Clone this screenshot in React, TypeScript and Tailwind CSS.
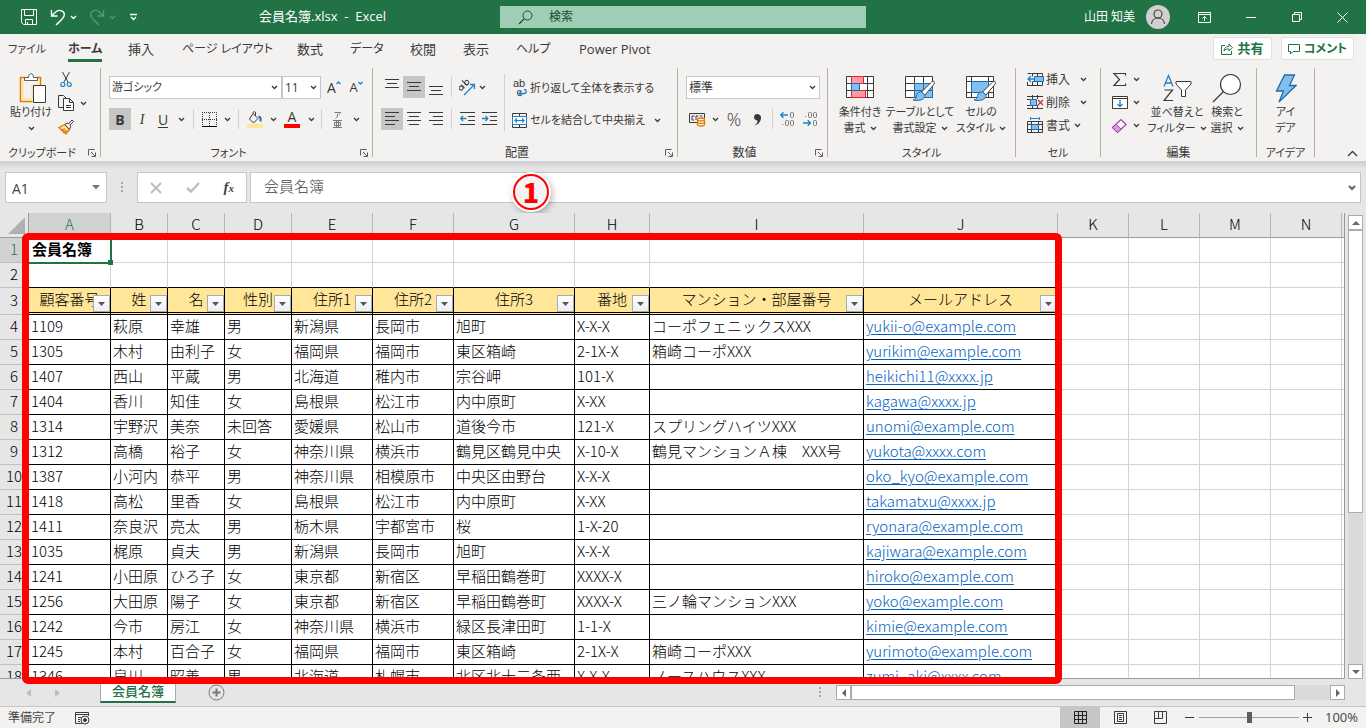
import type { ReactNode } from "react";
import clsx from "clsx";

interface Member {
  id: string;
  sei: string;
  mei: string;
  sex: string;
  addr1: string;
  addr2: string;
  addr3: string;
  lot: string;
  building: string;
  email: string;
}

const members: Member[] = [
  { id: "1109", sei: "萩原", mei: "幸雄", sex: "男", addr1: "新潟県", addr2: "長岡市", addr3: "旭町", lot: "X-X-X", building: "コーポフェニックスXXX", email: "yukii-o@example.com" },
  { id: "1305", sei: "木村", mei: "由利子", sex: "女", addr1: "福岡県", addr2: "福岡市", addr3: "東区箱崎", lot: "2-1X-X", building: "箱崎コーポXXX", email: "yurikim@example.com" },
  { id: "1407", sei: "西山", mei: "平蔵", sex: "男", addr1: "北海道", addr2: "稚内市", addr3: "宗谷岬", lot: "101-X", building: "", email: "heikichi11@xxxx.jp" },
  { id: "1404", sei: "香川", mei: "知佳", sex: "女", addr1: "島根県", addr2: "松江市", addr3: "内中原町", lot: "X-XX", building: "", email: "kagawa@xxxx.jp" },
  { id: "1314", sei: "宇野沢", mei: "美奈", sex: "未回答", addr1: "愛媛県", addr2: "松山市", addr3: "道後今市", lot: "121-X", building: "スプリングハイツXXX", email: "unomi@example.com" },
  { id: "1312", sei: "高橋", mei: "裕子", sex: "女", addr1: "神奈川県", addr2: "横浜市", addr3: "鶴見区鶴見中央", lot: "X-10-X", building: "鶴見マンションＡ棟　XXX号", email: "yukota@xxxx.com" },
  { id: "1387", sei: "小河内", mei: "恭平", sex: "男", addr1: "神奈川県", addr2: "相模原市", addr3: "中央区由野台", lot: "X-X-X", building: "", email: "oko_kyo@example.com" },
  { id: "1418", sei: "高松", mei: "里香", sex: "女", addr1: "島根県", addr2: "松江市", addr3: "内中原町", lot: "X-XX", building: "", email: "takamatxu@xxxx.jp" },
  { id: "1411", sei: "奈良沢", mei: "亮太", sex: "男", addr1: "栃木県", addr2: "宇都宮市", addr3: "桜", lot: "1-X-20", building: "", email: "ryonara@example.com" },
  { id: "1035", sei: "梶原", mei: "貞夫", sex: "男", addr1: "新潟県", addr2: "長岡市", addr3: "旭町", lot: "X-X-X", building: "", email: "kajiwara@example.com" },
  { id: "1241", sei: "小田原", mei: "ひろ子", sex: "女", addr1: "東京都", addr2: "新宿区", addr3: "早稲田鶴巻町", lot: "XXXX-X", building: "", email: "hiroko@example.com" },
  { id: "1256", sei: "大田原", mei: "陽子", sex: "女", addr1: "東京都", addr2: "新宿区", addr3: "早稲田鶴巻町", lot: "XXXX-X", building: "三ノ輪マンションXXX", email: "yoko@example.com" },
  { id: "1242", sei: "今市", mei: "房江", sex: "女", addr1: "神奈川県", addr2: "横浜市", addr3: "緑区長津田町", lot: "1-1-X", building: "", email: "kimie@example.com" },
  { id: "1245", sei: "本村", mei: "百合子", sex: "女", addr1: "福岡県", addr2: "福岡市", addr3: "東区箱崎", lot: "2-1X-X", building: "箱崎コーポXXX", email: "yurimoto@example.com" },
  { id: "1346", sei: "泉川", mei: "昭善", sex: "男", addr1: "北海道", addr2: "札幌市", addr3: "北区北十二条西", lot: "X-X-X", building: "ノースハウスXXX", email: "zumi_aki@xxxx.com" },
];

const columns = [
  { letter: "A", title: "顧客番号", width: "w-[82px]" },
  { letter: "B", title: "姓", width: "w-[57px]" },
  { letter: "C", title: "名", width: "w-[57px]" },
  { letter: "D", title: "性別", width: "w-[67px]" },
  { letter: "E", title: "住所1", width: "w-[81px]" },
  { letter: "F", title: "住所2", width: "w-[81px]" },
  { letter: "G", title: "住所3", width: "w-[121px]" },
  { letter: "H", title: "番地", width: "w-[75px]" },
  { letter: "I", title: "マンション・部屋番号", width: "w-[214px]" },
  { letter: "J", title: "メールアドレス", width: "w-[194px]" },
];

const emptyColumns = ["K", "L", "M", "N"];

const tabs = [
  { label: "ファイル", style: "w-[60px] text-[11px]" },
  { label: "ホーム", style: "w-[60px] text-[12px]" },
  { label: "挿入", style: "w-[54px] text-[13px]" },
  { label: "ページ レイアウト", style: "w-[115px] text-[12px]" },
  { label: "数式", style: "w-[53px] text-[13px]" },
  { label: "データ", style: "w-[60px] text-[12px]" },
  { label: "校閲", style: "w-[53px] text-[13px]" },
  { label: "表示", style: "w-[53px] text-[13px]" },
  { label: "ヘルプ", style: "w-[63px] text-[12px]" },
  { label: "Power Pivot", style: "w-[80px] text-[13px]" },
];

function Icon({ w = 16, h = 16, children }: { w?: number; h?: number; children: ReactNode }) {
  return (
    <svg width={w} height={h} viewBox={`0 0 ${w} ${h}`} fill="none" stroke="#3b3a39" className="shrink-0" aria-hidden="true">
      {children}
    </svg>
  );
}

function Chevron({ color = "#3b3a39" }: { color?: string }) {
  return (
    <svg width="7" height="5" viewBox="0 0 7 5" fill="none" stroke={color} strokeWidth="1.3" className="shrink-0" aria-hidden="true">
      <path d="M1 1l2.5 2.5L6 1" />
    </svg>
  );
}

function Tool({ label, width = "w-[22px]", active = false, children }: { label: string; width?: string; active?: boolean; children: ReactNode }) {
  return (
    <button aria-label={label} className={clsx("flex h-[22px] shrink-0 items-center justify-center", width, active && "bg-[#c8c6c4]")}>
      {children}
    </button>
  );
}

function Divider() {
  return <div className="mx-1 h-5 w-px shrink-0 bg-[#d2d0ce]" />;
}

function Launcher() {
  return (
    <button aria-label="詳細設定" className="flex w-4 shrink-0 items-center justify-center">
      <Icon w={8} h={8}>
        <path d="M.5 6.500V.5H6.500M3 3l4 4M7.500 3.500v4h-4" stroke="#605e5c" />
      </Icon>
    </button>
  );
}

function Group({ label, width, labelSize = "text-[11px]", launcher = false, children }: { label: string; width: string; labelSize?: string; launcher?: boolean; children: ReactNode }) {
  return (
    <section className={clsx("flex shrink-0", width)}>
      <div className="flex min-w-0 flex-1 flex-col">
        <div className="h-[77px]">{children}</div>
        <div className="flex h-4 items-center">
          <span className={clsx("flex-1 text-center leading-4 whitespace-nowrap", labelSize)}>{label}</span>
          {launcher && <Launcher />}
        </div>
      </div>
      <div className="h-[89px] w-px bg-[#b3b0ad]" />
    </section>
  );
}

function BigButton({ icon, lines, width, menu = true }: { icon: ReactNode; lines: [string, string]; width: string; menu?: boolean }) {
  return (
    <button className={clsx("flex shrink-0 flex-col items-center pt-1 text-[11px] leading-4 whitespace-nowrap", width)}>
      <span className="flex h-8 items-center justify-center">{icon}</span>
      <span>{lines[0]}</span>
      <span className="flex items-center gap-1">
        {lines[1]}
        {menu && <Chevron />}
      </span>
    </button>
  );
}

function Combo({ label, value, width, size = "text-[12px]" }: { label: string; value: string; width: string; size?: string }) {
  return (
    <div className={clsx("relative h-[23px] border border-[#c8c6c4] bg-white", width, size)}>
      <select aria-label={label} className="h-full w-full appearance-none bg-transparent pl-[2px] outline-none">
        <option>{value}</option>
      </select>
      <span className="pointer-events-none absolute top-2 right-[3px]">
        <Chevron />
      </span>
    </div>
  );
}

function TitleBar() {
  return (
    <header className="flex h-[34px] shrink-0 items-center bg-[#217346] text-white">
      <div className="flex min-w-0 flex-1 items-center">
        <button aria-label="上書き保存" className="ml-5">
          <Icon w={18} h={18}>
            <path d="M1.500 1.500h15v15h-13l-2-2zM4.500 1.500v6h9v-6M5.500 16.500v-5h7v5M7.500 14v2.500" stroke="#fff" />
          </Icon>
        </button>
        <button aria-label="元に戻す" className="ml-3">
          <Icon w={16} h={18}>
            <path d="M1.500 2v6h6M1.700 7.700L6 3.700c4-3 9.500 0 8 4.600C13.300 10.500 9 14 6 17" stroke="#fff" strokeWidth="1.4" />
          </Icon>
        </button>
        <button aria-label="元に戻すの一覧" className="ml-1">
          <Chevron color="#fff" />
        </button>
        <button aria-label="やり直し" className="ml-3">
          <Icon w={16} h={18}>
            <path d="M14.500 2v6h-6M14.300 7.700L10 3.700C6 .7.500 3.700 2 8.300 2.700 10.500 7 14 10 17" stroke="#4f9a70" strokeWidth="1.4" />
          </Icon>
        </button>
        <button aria-label="やり直しの一覧" className="ml-1">
          <Chevron color="#4f9a70" />
        </button>
        <button aria-label="クイック アクセス ツール バーのユーザー設定" className="ml-[13px]">
          <Icon w={9} h={8}>
            <path d="M1 1.500h7M2 4l2.500 2.500L7 4" stroke="#fff" strokeWidth="1.300" />
          </Icon>
        </button>
        <h1 className="ml-[121px] text-[13px] whitespace-pre">会員名簿.xlsx  -  Excel</h1>
      </div>
      <div className="flex h-[22px] w-[366px] shrink-0 items-center gap-4 bg-[#a0cdb6] pl-[18px]">
        <Icon w={15} h={15}>
          <circle cx="9.500" cy="5.500" r="4.500" stroke="#10502c" />
          <path d="M6.300 8.700L1 14" stroke="#10502c" strokeWidth="1.200" />
        </Icon>
        <input aria-label="検索" placeholder="検索" className="w-full bg-transparent outline-none placeholder:text-[#10502c]" />
      </div>
      <div className="flex flex-1 items-center justify-end">
        <span className="text-[12px]">山田 知美</span>
        <svg width="24" height="24" viewBox="0 0 24 24" className="mr-6 ml-[11px]" fill="none" stroke="#444" strokeWidth="1.200" aria-hidden="true">
          <circle cx="12" cy="12" r="12" fill="#d2d0ce" stroke="none" />
          <circle cx="12" cy="9" r="4" />
          <path d="M5.500 19c.5-8 12.500-8 13 0" />
        </svg>
        <button aria-label="リボンの表示オプション" className="flex w-[51px] justify-start pl-1">
          <Icon w={13} h={11}>
            <path d="M.5.500h12v10H.5zM.5 2.500h12M6.500 9V4.500M4.500 6.500l2-2 2 2" stroke="#fff" />
          </Icon>
        </button>
        <button aria-label="最小化" className="flex w-[46px] justify-start pl-[1px]">
          <Icon w={10} h={11}>
            <path d="M0 5.500h10" stroke="#fff" />
          </Icon>
        </button>
        <button aria-label="元のサイズに戻す" className="flex w-[46px] justify-start pl-[1px]">
          <Icon w={10} h={10}>
            <path d="M.5 2.500h7v7h-7zM2.500 2.500v-2h7v7h-2" stroke="#fff" />
          </Icon>
        </button>
        <button aria-label="閉じる" className="mr-[18px]">
          <Icon w={11} h={11}>
            <path d="M.5.500l10 10M10.500.500l-10 10" stroke="#fff" />
          </Icon>
        </button>
      </div>
    </header>
  );
}

function TabRow() {
  return (
    <nav className="flex h-[34px] items-start pl-2">
      {tabs.map((tab) => (
        <div key={tab.label} className={clsx("shrink-0", tab.style)}>
          <button
            className={clsx(
              "mt-1 border-b-3 pt-[1px] leading-5 whitespace-nowrap",
              tab.label === "ホーム" ? "border-[#217346] font-bold" : "border-transparent"
            )}
          >
            {tab.label}
          </button>
        </div>
      ))}
      <div className="mt-[3px] mr-3 ml-auto flex gap-[9px] font-bold text-[#217346]">
        <button className="flex h-[23px] w-[59px] items-center justify-center gap-1 rounded-xs border border-[#e1dfdd] bg-white text-[13px]">
          <Icon w={12} h={12}>
            <path d="M4 2.500H.5v9h10V8M3 8c.5-3.500 2-4.500 5-4.500V1l3.500 3.700L8 8V6C5.500 6 4.200 6.300 3 8z" stroke="#217346" />
          </Icon>
          共有
        </button>
        <button className="flex h-[23px] w-[73px] items-center justify-center gap-1 rounded-xs border border-[#e1dfdd] bg-white text-[12px]">
          <Icon w={12} h={12}>
            <path d="M.5 1.500h11v7H5l-2.500 2.500V8.500h-2z" stroke="#217346" />
          </Icon>
          コメント
        </button>
      </div>
    </nav>
  );
}

function ClipboardGroup() {
  return (
    <Group label="クリップボード" width="w-[101px]" launcher>
      <div className="flex pl-2">
        <button className="flex w-[46px] flex-col items-center pt-1 text-[11px] leading-4 whitespace-nowrap">
          <span className="flex h-8 items-center pl-1">
            <Icon w={28} h={31}>
              <path d="M7 4.500H1.500v24h12M17 4.500h4.500v8" stroke="#e07900" strokeWidth="1.500" />
              <path d="M3.500 6.500v20h10V12.500h6v-6" stroke="#ffe59a" strokeWidth="2" />
              <path d="M5.500 7.500v-3h4c0-5 5-5 5 0h4v3z" fill="#fff" stroke="#605e5c" />
              <path d="M14.500 12.500h12v17h-12z" fill="#fff" />
            </Icon>
          </span>
          貼り付け
          <span className="flex h-4 items-center">
            <Chevron />
          </span>
        </button>
        <div className="flex flex-col pl-1">
          <button aria-label="切り取り" className="flex h-[23px] w-4 items-center justify-center">
            <Icon w={12} h={17}>
              <path d="M2.500 1l6 11M9.500 1l-6 11" />
              <circle cx="2.800" cy="13.500" r="2" stroke="#1e82c8" strokeWidth="1.200" />
              <circle cx="9.200" cy="13.500" r="2" stroke="#1e82c8" strokeWidth="1.200" />
            </Icon>
          </button>
          <button aria-label="コピー" className="flex h-6 items-center gap-[5px]">
            <Icon w={17} h={17}>
              <path d="M5.500 12.500h-5V.5h5l3 3" />
              <path d="M5.500 3.500h6l4 4v8h-10zM11.500 3.500v4h4M8 10.500h5M8 12.500h5" fill="#fff" />
            </Icon>
            <Chevron />
          </button>
          <button aria-label="書式のコピー/貼り付け" className="flex h-[23px] w-4 items-center justify-center">
            <Icon w={16} h={16}>
              <path d="M1 8.500l6-3 4.500 5L8 15z" fill="#ffe59a" stroke="#e07900" strokeWidth="1.300" />
              <path d="M3 11.500l4-1.500M5 13.500l4-2" stroke="#e07900" strokeWidth="1.500" />
              <path d="M7 5.500l2-1.500 1.500 1L14 1l1.500 1.500L12 6l.5 2-1 2.500z" fill="#fff" />
            </Icon>
          </button>
        </div>
      </div>
    </Group>
  );
}

function FontGroup() {
  return (
    <Group label="フォント" width="w-[272px]" launcher>
      <div className="flex flex-col gap-[9px] pt-2 pl-2">
        <div className="flex items-center">
          <Combo label="フォント名" value="游ゴシック" width="w-[173px]" size="text-[11px]" />
          <Combo label="フォント サイズ" value="11" width="w-[39px]" />
          <Tool label="フォント サイズの拡大" width="ml-[2px] w-[22px]">
            <span className="text-[14px]">A</span>
            <Icon w={5} h={14}>
              <path d="M.5 3l2-2 2 2" stroke="#1e82c8" strokeWidth="1.300" />
            </Icon>
          </Tool>
          <Tool label="フォント サイズの縮小">
            <span className="text-[13px]">A</span>
            <Icon w={5} h={14}>
              <path d="M.5 1l2 2 2-2" stroke="#1e82c8" strokeWidth="1.300" />
            </Icon>
          </Tool>
        </div>
        <div className="flex items-center text-[14px]">
          <Tool label="太字" active>
            <b>B</b>
          </Tool>
          <Tool label="斜体">
            <i className="font-['Liberation_Serif',serif]">I</i>
          </Tool>
          <Tool label="下線" width="w-5">
            <u className="underline-offset-2">U</u>
          </Tool>
          <Tool label="下線の種類" width="w-4">
            <Chevron />
          </Tool>
          <Divider />
          <Tool label="罫線">
            <Icon w={15} h={15}>
              <path d="M0 .5h15M.5 0v14M14.500 0v14M7.500 1v13M0 7.500h15" strokeDasharray="1 1" />
              <path d="M0 14.500h15" stroke="#000" />
            </Icon>
          </Tool>
          <Tool label="罫線の種類" width="w-[14px]">
            <Chevron />
          </Tool>
          <Divider />
          <Tool label="塗りつぶしの色" width="w-6">
            <Icon w={16} h={17}>
              <path d="M6 2.500l5 5-4.500 4.500L2.500 8zM6 2.500C6 0 8.500 0 8.500 2v3" />
              <path d="M11.500 5.500c2 0 2.500 2 2 5" stroke="#1e6cb0" strokeWidth="2" />
              <path d="M0 13h16v4H0z" fill="#ffe699" stroke="none" />
            </Icon>
          </Tool>
          <Tool label="塗りつぶしの色の一覧" width="w-3">
            <Chevron />
          </Tool>
          <Tool label="フォントの色" width="w-[26px]">
            <span className="flex flex-col items-center">
              <span className="leading-[14px]">A</span>
              <span className="h-1 w-4 bg-[#ff0000]" />
            </span>
          </Tool>
          <Tool label="フォントの色の一覧" width="w-3">
            <Chevron />
          </Tool>
          <Divider />
          <Tool label="ふりがなの表示">
            <Icon w={9} h={17}>
              <path d="M1.500 1.500h6L6 3.500M4.500 3v2.500L2.500 7.500M0 9.500h9M0 16.500h9M3.500 9.500v7M5.500 9.500v7M1.500 11.500h6v3h-6z" stroke="#797775" />
            </Icon>
          </Tool>
          <Tool label="ふりがなの設定" width="w-4">
            <Chevron />
          </Tool>
        </div>
      </div>
    </Group>
  );
}

function AlignmentGroup() {
  return (
    <Group label="配置" width="w-[305px]" labelSize="text-[12px]" launcher>
      <div className="flex pt-[6px] pl-2">
        <div className="flex flex-col gap-[10px] pt-[2px]">
          <div className="flex items-center">
            <Tool label="上揃え">
              <Icon w={14} h={18}>
                <path d="M0 1.500h14M2 5.500h10M0 9.500h14" />
              </Icon>
            </Tool>
            <Tool label="上下中央揃え" active>
              <Icon w={14} h={10}>
                <path d="M0 .5h14M2 4.500h10M0 8.500h14" />
              </Icon>
            </Tool>
            <Tool label="下揃え">
              <Icon w={14} h={18}>
                <path d="M0 8.500h14M2 12.500h10M0 16.500h14" />
              </Icon>
            </Tool>
            <Divider />
            <Tool label="方向">
              <Icon w={17} h={17}>
                <g transform="rotate(-45 6 8)">
                  <circle cx="2.500" cy="6" r="2" />
                  <path d="M5 3.500v5M8.500 1v7.500" />
                  <circle cx="10.500" cy="6" r="2" />
                </g>
                <path d="M5 16L15 6M11 5.500h4.500V10" stroke="#1e82c8" strokeWidth="1.300" />
              </Icon>
            </Tool>
            <Tool label="方向の一覧" width="w-2">
              <Chevron />
            </Tool>
          </div>
          <div className="flex items-center">
            <Tool label="左揃え" active>
              <Icon w={14} h={14}>
                <path d="M0 .5h14M0 4.500h10M0 8.500h14M0 12.500h10" />
              </Icon>
            </Tool>
            <Tool label="中央揃え">
              <Icon w={14} h={14}>
                <path d="M0 .5h14M2 4.500h10M0 8.500h14M2 12.500h10" />
              </Icon>
            </Tool>
            <Tool label="右揃え">
              <Icon w={14} h={14}>
                <path d="M0 .5h14M4 4.500h10M0 8.500h14M4 12.500h10" />
              </Icon>
            </Tool>
            <Divider />
            <Tool label="インデントを減らす">
              <Icon w={15} h={14}>
                <path d="M0 .5h15M8 4.500h7M8 8.500h7M0 12.500h15" />
                <path d="M6.500 6.500h-6M3 4L.7 6.500 3 9" stroke="#1e82c8" strokeWidth="1.300" />
              </Icon>
            </Tool>
            <Tool label="インデントを増やす">
              <Icon w={15} h={14}>
                <path d="M0 .5h15M8 4.500h7M8 8.500h7M0 12.500h15" />
                <path d="M0 6.500h6M3.500 4l2.300 2.500L3.500 9" stroke="#1e82c8" strokeWidth="1.300" />
              </Icon>
            </Tool>
          </div>
        </div>
        <div className="ml-1 flex flex-col gap-[10px] border-l border-[#d2d0ce] pt-[3px] pl-[7px] text-[11px]">
          <button className="flex h-[22px] items-center gap-[3px] whitespace-nowrap">
            <span className="relative flex w-[15px] flex-col items-start pl-[1px] font-['Liberation_Sans',sans-serif] text-[11px] leading-[9px]">
              ab
              <br />c
              <svg width="9" height="8" viewBox="0 0 9 8" fill="none" stroke="#1e82c8" strokeWidth="1.300" className="absolute right-0 bottom-0" aria-hidden="true">
                <path d="M6 .5c3 0 3 4 0 4H1M3.500 2L1 4.500 3.500 7" />
              </svg>
            </span>
            折り返して全体を表示する
          </button>
          <button className="flex h-[22px] items-center gap-[3px] whitespace-nowrap">
            <Icon w={15} h={15}>
              <path d="M.5.500h14v14H.5zM7.500.500v3M7.500 11.500v3" />
              <path d="M.5 3.500h14v8H.5z" fill="#fff" stroke="#1e82c8" />
              <path d="M3 7.500h9M5 5.500l-2 2 2 2M10 5.500l2 2-2 2" stroke="#1e82c8" strokeWidth="1.200" />
            </Icon>
            セルを結合して中央揃え
            <span className="ml-[6px]">
              <Chevron />
            </span>
          </button>
        </div>
      </div>
    </Group>
  );
}

function NumberGroup() {
  return (
    <Group label="数値" width="w-[150px]" labelSize="text-[12px]" launcher>
      <div className="flex flex-col gap-[9px] pt-2 pl-2">
        <Combo label="表示形式" value="標準" width="w-[134px]" />
        <div className="flex items-center">
          <Tool label="通貨表示形式">
            <Icon w={17} h={15}>
              <path d="M9 10.500H.5V1.500h15V6M5.500 4H3v4h2M7 8V4h2.500M11 4h2.500" />
              <path d="M8.500 7.500c0-2 7-2 7 0v5c0 2-7 2-7 0z" fill="#fff" stroke="#e07900" strokeWidth="1.300" />
              <path d="M8.500 7.500c0 2 7 2 7 0M8.500 10c0 2 7 2 7 0" stroke="#e07900" strokeWidth="1.300" />
            </Icon>
          </Tool>
          <Tool label="通貨の一覧" width="w-[14px]">
            <Chevron />
          </Tool>
          <Tool label="パーセント スタイル" width="w-6">
            <span className="text-[18px] font-light">%</span>
          </Tool>
          <Tool label="桁区切りスタイル">
            <Icon w={9} h={13}>
              <path d="M1 4c0-4.500 7.500-4 7 1-.3 4-3 6.500-6.500 7.500 2-1.500 3-3 3-5C2.500 7.500 1 6 1 4z" fill="#3b3a39" stroke="none" />
            </Icon>
          </Tool>
          <Divider />
          <Tool label="小数点以下の表示桁数を増やす">
            <Icon w={16} h={16}>
              <rect x="10.500" y="1.500" width="3" height="5" rx="1" stroke="#797775" />
              <path d="M2.500 13h1v1h-1z" fill="#797775" stroke="none" />
              <rect x="5.500" y="9.500" width="3" height="5" rx="1" stroke="#797775" />
              <rect x="10.500" y="9.500" width="3" height="5" rx="1" stroke="#797775" />
              <path d="M8 4H.7M3.500 1.200L.7 4l2.800 2.800" stroke="#1e82c8" strokeWidth="1.300" />
            </Icon>
          </Tool>
          <Tool label="小数点以下の表示桁数を減らす">
            <Icon w={16} h={16}>
              <path d="M3 5h1v1H3z" fill="#797775" stroke="none" />
              <rect x="6.500" y="1.500" width="3" height="5" rx="1" stroke="#797775" />
              <rect x="11.500" y="1.500" width="3" height="5" rx="1" stroke="#797775" />
              <rect x="11.500" y="9.500" width="3" height="5" rx="1" stroke="#797775" />
              <path d="M1 12h7.500M5.700 9.200L8.500 12l-2.800 2.800" stroke="#1e82c8" strokeWidth="1.300" />
            </Icon>
          </Tool>
        </div>
      </div>
    </Group>
  );
}

function Brush() {
  return (
    <>
      <path d="M29 7.500c1 1 0 2.500-1 4L20 21l-3.500-3L25.500 9c1.500-1.500 2.500-2.300 3.500-1.500z" fill="#fff" />
      <path d="M16.500 18l3.500 3c0 4-4 6.500-12 5 3-.5 3-2 3.500-4.500.5-2.500 3-4 5-3.500z" fill="#83beec" stroke="#1e6cb0" />
    </>
  );
}

function StyleGroup() {
  return (
    <Group label="スタイル" width="w-[188px]">
      <div className="flex pl-1">
        <BigButton
          width="w-[56px]"
          lines={["条件付き", "書式"]}
          icon={
            <Icon w={29} h={28}>
              <path d="M.5 2.500h27v21H.5zM.5 9.500h27M.5 16.500h27M5.500 2.500v21M21.500 2.500v21" fill="#fff" />
              <path d="M5.500 2.500h12v7h-12zM5.500 16.500h14v7h-14z" fill="#ff9ba0" stroke="#e3242b" />
              <path d="M5.500 9.500h8v7h-8z" fill="#83beec" stroke="#1e6cb0" />
            </Icon>
          }
        />
        <BigButton
          width="w-16"
          lines={["テーブルとして", "書式設定"]}
          icon={
            <Icon w={31} h={28}>
              <path d="M.5 2.500h27v21H.5zM.5 9.500h27M.5 16.500h27M9.500 2.500v21M18.500 2.500v21" fill="#fff" />
              <path d="M9.500 9.500h18v14h-18zM9.500 16.500h18M18.500 9.500v14" fill="#83beec" stroke="#1e6cb0" />
              <Brush />
            </Icon>
          }
        />
        <BigButton
          width="w-[58px]"
          lines={["セルの", "スタイル"]}
          icon={
            <Icon w={31} h={28}>
              <path d="M.5 2.500h27v21H.5zM.5 7.500h27M.5 18.500h27M5.500 2.500v21M22.500 2.500v21" fill="#fff" />
              <path d="M5.500 7.500h17v11h-17z" fill="#83beec" stroke="#1e6cb0" />
              <Brush />
            </Icon>
          }
        />
      </div>
    </Group>
  );
}

function CellsGroup() {
  return (
    <Group label="セル" width="w-[85px]">
      <div className="flex flex-col pl-[11px]">
        <button className="flex h-[23px] items-center gap-[2px]">
          <Icon w={17} h={15}>
            <path d="M4.500 1.500h-4M.5 13.500h15V1.500h-11M.5 10v3.500M5.500 9.500v4M10.500 1.500v12M5.500 1.500v3M6 9.500h9.500" />
            <path d="M7.500 4.500h9v5h-9z" fill="#83beec" stroke="#1e6cb0" />
            <path d="M8 7H1M4 4L1 7l3 3" stroke="#1e82c8" strokeWidth="1.300" />
          </Icon>
          挿入
          <span className="ml-2">
            <Chevron />
          </span>
        </button>
        <button className="flex h-[23px] items-center gap-[2px]">
          <Icon w={17} h={15}>
            <path d="M0 1.500h16M0 13.500h16M5.500 0v4M10.500 0v4M5.500 10v4M10.500 10v4M0 4.500h3M0 10.500h3" />
            <path d="M3.500 4.500h6v6h-6z" fill="#83beec" stroke="#1e6cb0" />
            <path d="M11 5l5 5M16 5l-5 5" stroke="#e3242b" strokeWidth="1.300" />
          </Icon>
          削除
          <span className="ml-2">
            <Chevron />
          </span>
        </button>
        <button className="flex h-[23px] items-center gap-[2px]">
          <Icon w={17} h={17}>
            <path d="M.5 4.500h15v11H.5zM.5 7.500h15M.5 12.500h15M4.500 4.500v11M11.500 4.500v11" />
            <path d="M4.500 7.500h7v5h-7z" fill="#83beec" stroke="#1e6cb0" />
            <path d="M3.500 1.500h9M3.500 0v3M12.500 0v3" stroke="#1e82c8" />
          </Icon>
          書式
          <span className="ml-[2px]">
            <Chevron />
          </span>
        </button>
      </div>
    </Group>
  );
}

function EditGroup() {
  return (
    <Group label="編集" width="w-[156px]" labelSize="text-[12px]">
      <div className="flex pl-[10px]">
        <div className="flex w-[37px] flex-col">
          <button aria-label="オート SUM" className="flex h-[23px] items-center gap-1">
            <Icon w={18} h={15}>
              <path d="M14.500 3.500v-2H3l5.500 6L3 13.500h11.500v-2" strokeWidth="1.200" />
            </Icon>
            <Chevron />
          </button>
          <button aria-label="フィル" className="flex h-[23px] items-center gap-1">
            <Icon w={18} h={15}>
              <path d="M1.500 1.500h15v12h-15zM1.500 3.500h15" fill="#fff" />
              <path d="M9 5v6.500M6.500 9L9 11.500 11.500 9" stroke="#1e82c8" strokeWidth="1.300" />
            </Icon>
            <Chevron />
          </button>
          <button aria-label="クリア" className="flex h-[23px] items-center gap-1">
            <Icon w={18} h={16}>
              <path d="M1.500 9.500L10 1.500l5 5-8.500 8z" fill="#fff" stroke="#a33ab0" strokeWidth="1.200" />
              <path d="M1.500 9.500L5 6.200l5 5-3.500 3.300z" fill="#d59ddc" stroke="#a33ab0" />
            </Icon>
            <Chevron />
          </button>
        </div>
        <BigButton
          width="w-[58px]"
          lines={["並べ替えと", "フィルター"]}
          icon={
            <Icon w={29} h={28}>
              <path d="M1 12.500L5.500 1.500 10 12.500M2.700 9h5.600" stroke="#1e82c8" strokeWidth="1.300" />
              <path d="M1.500 16h8L1 26.500h9" strokeWidth="1.200" />
              <path d="M13 7.500h15v2.500l-5.500 6v6.500h-4V16L13 10z" fill="#fff" />
            </Icon>
          }
        />
        <BigButton
          width="w-[42px]"
          lines={["検索と", "選択"]}
          icon={
            <Icon w={30} h={30}>
              <circle cx="18.500" cy="11.500" r="10" fill="#fff" strokeWidth="1.200" />
              <path d="M11.500 18.500L1 29" strokeWidth="1.300" />
            </Icon>
          }
        />
      </div>
    </Group>
  );
}

function Ribbon() {
  return (
    <div className="shrink-0 bg-[#f3f2f1] text-[#3b3a39]">
      <TabRow />
      <div className="flex h-[93px]">
        <ClipboardGroup />
        <FontGroup />
        <AlignmentGroup />
        <NumberGroup />
        <StyleGroup />
        <CellsGroup />
        <EditGroup />
        <Group label="アイデア" width="w-[58px]">
          <BigButton
            width="w-[57px]"
            lines={["アイ", "デア"]}
            menu={false}
            icon={
              <Icon w={22} h={29}>
                <path d="M9.500 1h10L14.500 11.500h6.500L4 28l4.500-11H1.500z" fill="#83beec" stroke="#1e6cb0" strokeWidth="1.300" />
              </Icon>
            }
          />
        </Group>
        <button aria-label="リボンを折りたたむ" className="mr-2 mb-1 ml-auto self-end">
          <Icon w={11} h={7}>
            <path d="M1 6l4.500-4.500L10 6" strokeWidth="1.300" />
          </Icon>
        </button>
      </div>
    </div>
  );
}

function Grip() {
  return (
    <svg width="2" height="11" viewBox="0 0 2 11" fill="#a6a6a6" className="shrink-0" aria-hidden="true">
      <path d="M0 0h2v2H0zM0 4h2v2H0zM0 8h2v2H0z" />
    </svg>
  );
}

function FormulaBar() {
  return (
    <div className="relative shrink-0">
      <div className="h-2 bg-linear-to-b from-[#cdcdcd] to-[#e6e6e6]" />
      <div className="flex h-11 items-start pt-[3px] pr-[5px] pl-[5px] text-[15px] text-[#444]">
        <div className="flex h-[31px] w-[102px] shrink-0 items-center border border-[#c6c6c6] bg-white px-[6px]">
          <input aria-label="名前ボックス" defaultValue="A1" className="w-full min-w-0 bg-transparent pt-[2px] text-[14px] outline-none" />
          <Icon w={8} h={5}>
            <path d="M0 0h8L4 4.500z" fill="#777" stroke="none" />
          </Icon>
        </div>
        <div className="flex h-[31px] w-[30px] shrink-0 items-center justify-center">
          <Grip />
        </div>
        <div className="mr-[3px] flex h-[31px] w-[110px] shrink-0 items-center justify-around border border-[#c6c6c6] bg-white">
          <button aria-label="キャンセル">
            <Icon w={12} h={12}>
              <path d="M1 1l10 10M11 1L1 11" stroke="#bdbdbd" strokeWidth="2" />
            </Icon>
          </button>
          <button aria-label="入力">
            <Icon w={14} h={11}>
              <path d="M1 6l4 3.500L13 1" stroke="#bdbdbd" strokeWidth="2.500" />
            </Icon>
          </button>
          <button aria-label="関数の挿入" className="font-['Liberation_Serif',serif] text-[15px] leading-4 font-bold italic">
            f<span className="text-[11px]">x</span>
          </button>
        </div>
        <div className="flex h-[31px] min-w-0 flex-1 items-center border border-[#c6c6c6] bg-white pr-1 pl-[13px]">
          <input aria-label="数式バー" defaultValue="会員名簿" className="w-full min-w-0 bg-transparent pb-[2px] font-light outline-none" />
          <Icon w={8} h={6}>
            <path d="M1 1l3 3 3-3" stroke="#666" strokeWidth="2" />
          </Icon>
        </div>
      </div>
      {/* step number callout */}
      <div className="absolute top-[11px] left-[511px] flex size-10 items-center justify-center rounded-full bg-white shadow-[2px_3px_6px_rgba(0,0,0,0.25)]">
        <span className="flex size-9 items-center justify-center rounded-full border-2 border-[#ff0000] bg-[#f4f4f4] font-['Noto_Sans_CJK_JP',sans-serif] text-[27px] leading-8 font-black text-[#ff0000]">1</span>
      </div>
    </div>
  );
}

function RowHeader({ n, selected = false }: { n: number; selected?: boolean }) {
  return (
    <th
      scope="row"
      className={clsx(
        "h-[25px] border-r border-b border-r-[#9b9b9b] border-b-[#c0c0c0] p-0 pb-[2px] text-center leading-5 font-light",
        selected ? "bg-[#d2d2d2] text-[#217346]" : "bg-[#e6e6e6]"
      )}
    >
      {n}
    </th>
  );
}

function EmptyCells() {
  return (
    <>
      {emptyColumns.map((letter) => (
        <td key={letter} className="border-r border-b border-[#d4d4d4]" />
      ))}
      <td className="border-b border-[#d4d4d4]" />
    </>
  );
}

function Sheet() {
  return (
    <div className="min-w-0 flex-1 overflow-hidden border-r border-b border-[#9b9b9b] bg-white">
      <table className="w-full table-fixed border-separate border-spacing-0 text-[15px] font-light whitespace-nowrap text-black">
        <colgroup>
          <col className="w-[29px]" />
          {columns.map((column) => (
            <col key={column.letter} className={column.width} />
          ))}
          {emptyColumns.map((letter) => (
            <col key={letter} className="w-[71px]" />
          ))}
          <col />
        </colgroup>
        <thead>
          <tr className="bg-[#e6e6e6]">
            <td className="h-[25px] border-r border-b border-[#9b9b9b] p-0">
              <svg width="17" height="17" viewBox="0 0 17 17" className="ml-2" aria-hidden="true">
                <path d="M17 0v17H0z" fill="#b1b1b1" />
              </svg>
            </td>
            {columns.map((column) => (
              <th
                key={column.letter}
                scope="col"
                className={clsx(
                  "border-r border-b border-r-[#b5b5b5] border-b-[#9b9b9b] p-0 pb-[2px] leading-5 font-light",
                  column.letter === "A" && "bg-[#d2d2d2] text-[#217346]"
                )}
              >
                {column.letter}
              </th>
            ))}
            {emptyColumns.map((letter) => (
              <th key={letter} scope="col" className="border-r border-b border-r-[#b5b5b5] border-b-[#9b9b9b] p-0 pb-[2px] leading-5 font-light">
                {letter}
              </th>
            ))}
            <td className="border-b border-[#9b9b9b]" />
          </tr>
        </thead>
        <tbody>
          <tr>
            <RowHeader n={1} selected />
            <td className="relative border-r border-b border-[#217346] p-0 pb-[2px] pl-[3px] leading-5 font-bold">
              会員名簿
              <div className="absolute inset-0 -right-[2px] -bottom-[2px] border-r border-b border-[#217346]" />
              <div className="absolute -right-[3px] -bottom-[3px] size-[5px] bg-[#217346]" />
            </td>
            {columns.slice(1).map((column) => (
              <td key={column.letter} className="border-r border-b border-[#d4d4d4]" />
            ))}
            <EmptyCells />
          </tr>
          <tr>
            <RowHeader n={2} />
            {columns.map((column) => (
              <td key={column.letter} className="border-r border-b border-r-[#d4d4d4] border-b-black" />
            ))}
            <EmptyCells />
          </tr>
          <tr className="h-[27px]">
            <RowHeader n={3} />
            {columns.map((column) => (
              <td key={column.letter} className="relative border-r border-b-3 border-black bg-[#ffe699] p-0 pb-[2px] text-center leading-5 [border-bottom-style:double]">
                {column.title}
                <button aria-label={`${column.title}のフィルター`} className="absolute right-0 bottom-0 flex size-[17px] items-center justify-center border border-[#a5acb5] bg-linear-to-b from-white to-[#eceef4]">
                  <svg width="7" height="4" viewBox="0 0 7 4" aria-hidden="true">
                    <path d="M0 0h7L3.500 4z" fill="#555" />
                  </svg>
                </button>
              </td>
            ))}
            <EmptyCells />
          </tr>
          {members.map((member, i) => (
            <tr key={member.id}>
              <RowHeader n={i + 4} />
              {[member.id, member.sei, member.mei, member.sex, member.addr1, member.addr2, member.addr3, member.lot, member.building].map((text, j) => (
                <td key={j} className="border-r border-b border-black p-0 pb-[2px] pl-[2px] leading-5">
                  {text}
                </td>
              ))}
              <td className="border-r border-b border-black p-0 pb-[2px] pl-[2px] leading-5">
                <a href={`mailto:${member.email}`} className="text-[#0563c1] underline underline-offset-2">
                  {member.email}
                </a>
              </td>
              <EmptyCells />
            </tr>
          ))}
        </tbody>
      </table>
    </div>
  );
}

function ScrollButton({ label, path }: { label: string; path: string }) {
  return (
    <button aria-label={label} className="flex size-[15px] shrink-0 items-center justify-center border border-[#ababab] bg-white">
      <svg width="8" height="8" viewBox="0 0 8 8" fill="#666" aria-hidden="true">
        <path d={path} />
      </svg>
    </button>
  );
}

function SheetTabs() {
  return (
    <div className="flex h-[27px] shrink-0 items-start">
      <div className="flex h-[27px] w-[100px] items-center gap-6 pl-[26px]">
        <button aria-label="前のシート">
          <svg width="5" height="8" viewBox="0 0 5 8" fill="#bdbdbd" aria-hidden="true"><path d="M5 0v8L0 4z" /></svg>
        </button>
        <button aria-label="次のシート">
          <svg width="5" height="8" viewBox="0 0 5 8" fill="#bdbdbd" aria-hidden="true"><path d="M0 0v8l5-4z" /></svg>
        </button>
      </div>
      <button className="h-6 w-[76px] border-x border-b-2 border-x-[#ababab] border-b-[#217346] bg-white pt-[2px] text-[13px] leading-4 font-medium text-[#217346]">会員名簿</button>
      <button aria-label="新しいシート" className="mt-[5px] ml-8">
        <Icon w={17} h={17}>
          <circle cx="8.500" cy="8.500" r="7.500" stroke="#777" />
          <path d="M4.500 8.500h8M8.500 4.500v8" stroke="#777" strokeWidth="2" />
        </Icon>
      </button>
      <div className="mr-[21px] ml-auto flex h-[27px] items-center">
        <Grip />
        <div className="ml-[15px] flex w-[509px] bg-[#dadada]">
          <ScrollButton label="左へスクロール" path="M6 0v8L2 4z" />
          <div className="h-[15px] w-[444px] border border-[#ababab] bg-white" />
          <div className="flex-1" />
          <ScrollButton label="右へスクロール" path="M2 0v8l4-4z" />
        </div>
      </div>
    </div>
  );
}

function StatusBar() {
  return (
    <footer className="flex h-[22px] shrink-0 items-center border-t border-[#c6c6c6] bg-[#f3f2f1] text-[#444]">
      <span className="pl-2">準備完了</span>
      <button aria-label="マクロの記録" className="ml-[19px]">
        <Icon w={15} h={14}>
          <path d="M7 12.500H.5V1.500h13V5M.5 3.500h13M3 6.500h3M3 8.500h2M3 10.500h2" />
          <circle cx="10" cy="9" r="4" />
          <circle cx="10" cy="9" r="1.500" fill="#3b3a39" />
        </Icon>
      </button>
      <div className="ml-auto flex h-full items-center">
        <button aria-label="標準" className="flex h-full w-10 items-center justify-center bg-[#c8c6c4]">
          <Icon w={13} h={13}>
            <path d="M.5.500h12v12H.5zM.5 4.500h12M.5 8.500h12M4.500.500v12M8.500.500v12" stroke="#222" />
          </Icon>
        </button>
        <button aria-label="ページ レイアウト" className="flex h-full w-10 items-center justify-center">
          <Icon w={13} h={13}>
            <path d="M.5.500h12v12H.5zM3.500 2.500h6v8h-6zM5 4.500h3M5 6.500h3M5 8.500h3" />
          </Icon>
        </button>
        <button aria-label="改ページ プレビュー" className="flex h-full w-10 items-center justify-center">
          <Icon w={13} h={13}>
            <path d="M.5.500h12v12H.5zM.5 7.500h8v-7M4.500.500v7" />
          </Icon>
        </button>
        <button aria-label="縮小" className="ml-[5px] flex w-[14px] items-center">
          <Icon w={9} h={9}>
            <path d="M0 4.500h9" />
          </Icon>
        </button>
        <input
          type="range"
          aria-label="ズーム"
          defaultValue={50}
          className="h-3 w-[100px] appearance-none bg-transparent [&::-webkit-slider-runnable-track]:h-px [&::-webkit-slider-runnable-track]:bg-[#a19f9d] [&::-webkit-slider-thumb]:-mt-[5px] [&::-webkit-slider-thumb]:h-[11px] [&::-webkit-slider-thumb]:w-[5px] [&::-webkit-slider-thumb]:appearance-none [&::-webkit-slider-thumb]:bg-[#605e5c]"
        />
        <button aria-label="拡大" className="ml-1">
          <Icon w={9} h={9}>
            <path d="M0 4.500h9M4.500 0v9" />
          </Icon>
        </button>
        <span className="mr-2 ml-3 w-[34px] text-right text-[13px]">100%</span>
      </div>
    </footer>
  );
}

export default function App() {
  return (
    <div className="flex h-screen flex-col overflow-hidden bg-[#e6e6e6] font-['Open_Sans','Noto_Sans_CJK_JP',sans-serif] text-[12px] [font-feature-settings:'palt']">
      <TitleBar />
      <Ribbon />
      <FormulaBar />
      <main className="relative flex min-h-0 flex-1 font-['Noto_Sans_CJK_JP',sans-serif] [font-feature-settings:normal]">
        <Sheet />
        <div className="flex w-[21px] shrink-0 flex-col pt-[2px] pl-[3px]">
          <ScrollButton label="上へスクロール" path="M0 6h8L4 2z" />
          <div className="h-[283px] w-[15px] border border-[#ababab] bg-white" />
          <div className="w-[15px] flex-1 bg-[#dadada]" />
          <ScrollButton label="下へスクロール" path="M0 2h8L4 6z" />
        </div>
        {/* highlight around the member list */}
        <div className="pointer-events-none absolute top-5 -bottom-[5px] left-[22px] w-10/12 max-w-[1040px] rounded-md border-[7px] border-[#ff0000]" />
      </main>
      <SheetTabs />
      <StatusBar />
    </div>
  );
}
